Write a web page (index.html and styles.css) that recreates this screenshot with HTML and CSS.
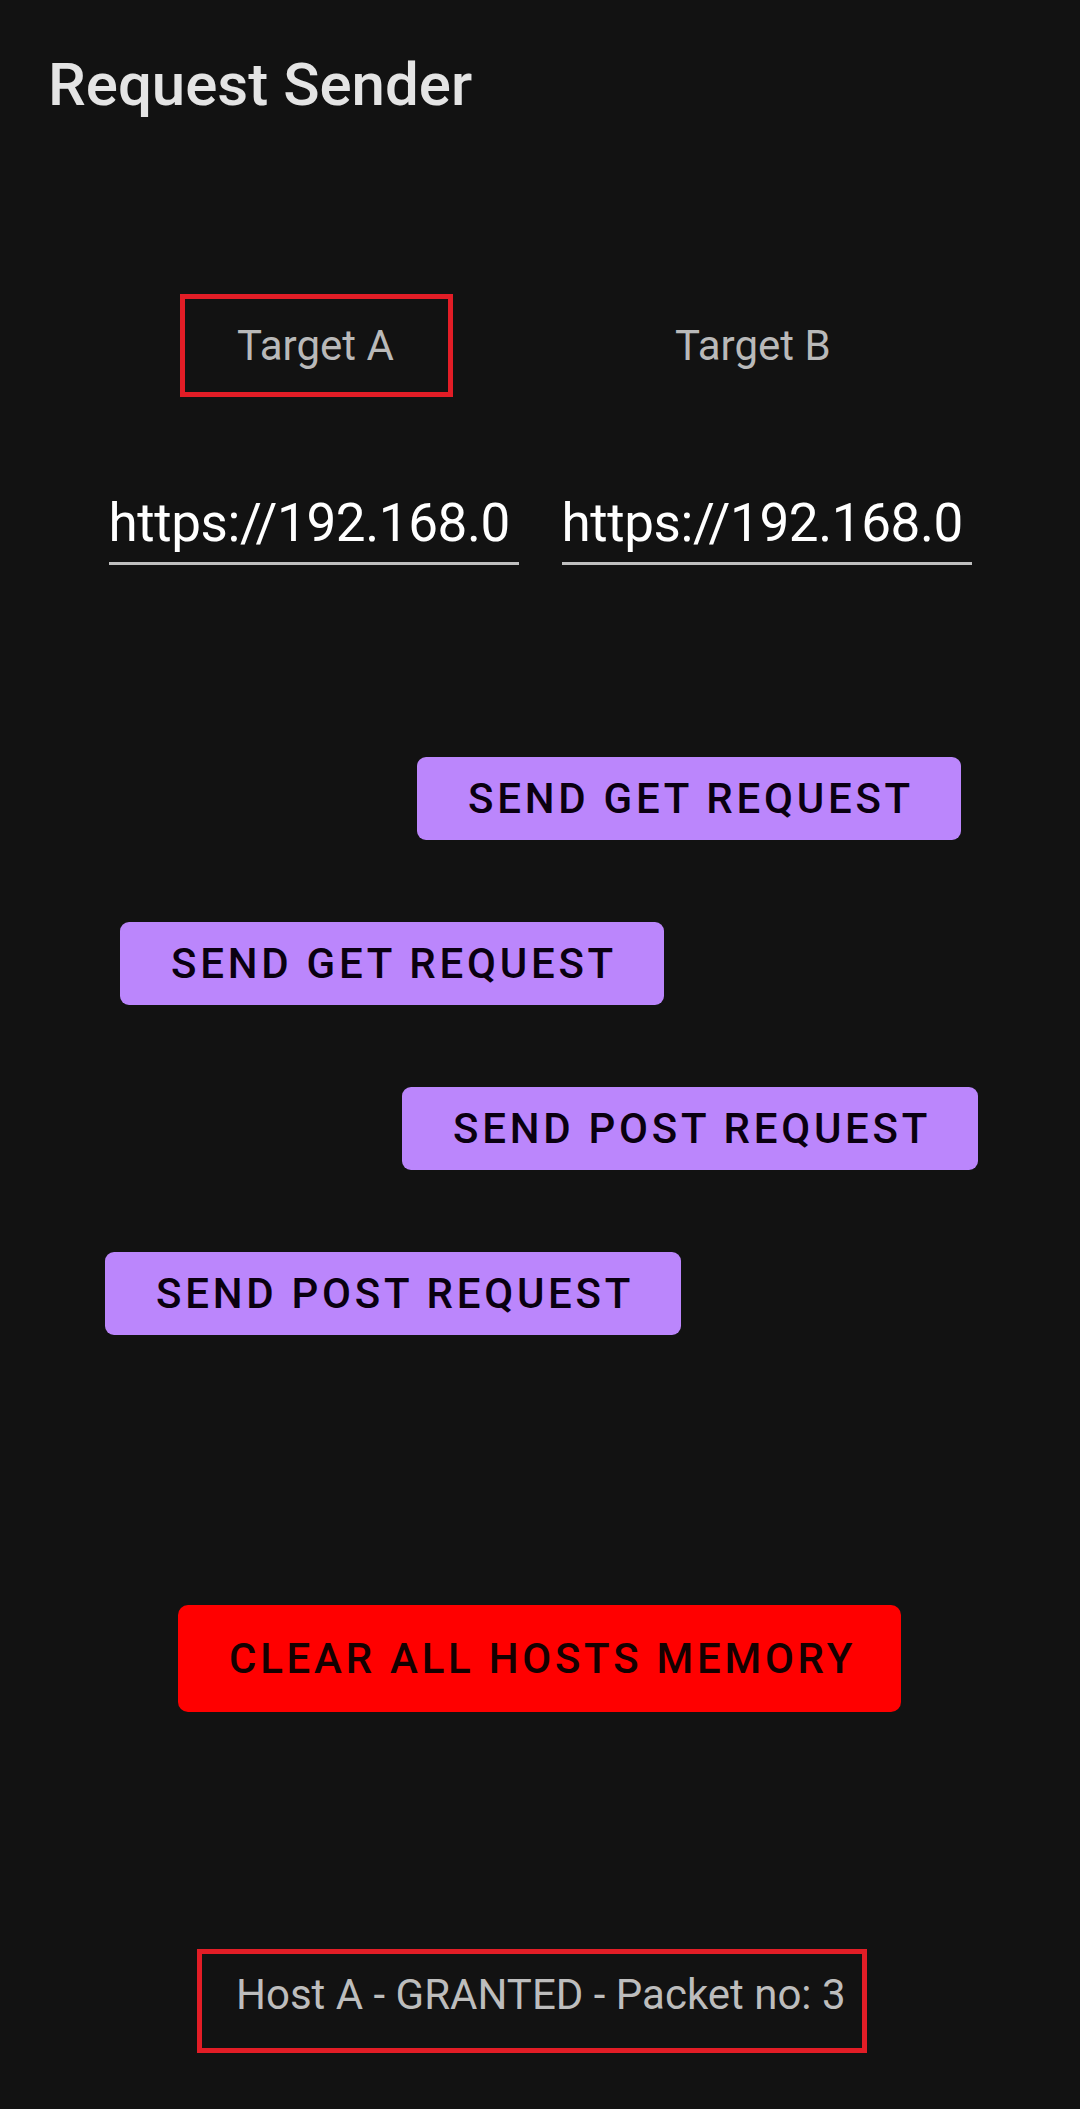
FILE: index.html
```html
<!DOCTYPE html>
<html lang="en">
<head>
<meta charset="utf-8">
<title>Request Sender</title>
<link rel="stylesheet" href="styles.css">
</head>
<body>
<div class="app">
  <header class="toolbar">
    <h1 class="title">Request Sender</h1>
  </header>

  <div class="targets">
    <div class="target target--selected">Target A</div>
    <div class="target">Target B</div>
  </div>

  <div class="urls">
    <div class="url">https://192.168.0</div>
    <div class="url">https://192.168.0</div>
  </div>

  <div class="actions">
    <div class="action-row action-row--b-get"><button class="btn">SEND GET REQUEST</button></div>
    <div class="action-row action-row--a-get"><button class="btn">SEND GET REQUEST</button></div>
    <div class="action-row action-row--b-post"><button class="btn">SEND POST REQUEST</button></div>
    <div class="action-row action-row--a-post"><button class="btn">SEND POST REQUEST</button></div>
  </div>

  <div class="clear-row">
    <button class="btn btn--danger">CLEAR ALL HOSTS MEMORY</button>
  </div>

  <div class="status-row">
    <div class="status">Host A - GRANTED - Packet no: 3</div>
  </div>
</div>
</body>
</html>
```

FILE: styles.css
```css
* {
  box-sizing: border-box;
}

html, body {
  margin: 0;
  padding: 0;
  background: #121212;
}

body {
  font-family: Roboto, "Noto Sans", "Liberation Sans", sans-serif;
  width: 1080px;
  min-height: 2109px;
}

.app {
  display: flex;
  flex-direction: column;
}

.toolbar {
  height: 120px;
  padding: 50px 0 0 48px;
}

.title {
  margin: 0;
  font-size: 60px;
  line-height: 70px;
  font-weight: 500;
  color: #e4e4e4;
}

.targets {
  margin-top: 174px;
  display: flex;
  gap: 165px;
  padding-left: 180px;
}

.target {
  width: 273px;
  height: 103px;
  border: 5px solid transparent;
  padding-left: 52px;
  display: flex;
  align-items: center;
  font-size: 42px;
  line-height: 49px;
  color: #b9b9b9;
}

.target--selected {
  border-color: #e21d26;
}

.urls {
  margin-top: 95px;
  display: flex;
  justify-content: center;
  gap: 43px;
}

.url {
  width: 410px;
  font-size: 53px;
  letter-spacing: -0.4px;
  line-height: 63px;
  color: #ffffff;
  padding-bottom: 7px;
  border-bottom: 3px solid #bfbfbf;
  white-space: nowrap;
}

.actions {
  margin-top: 192px;
  display: flex;
  flex-direction: column;
  gap: 82px;
}

.action-row {
  display: flex;
}

.action-row--b-get { padding-left: 417px; }
.action-row--a-get { padding-left: 120px; }
.action-row--b-post { padding-left: 402px; }
.action-row--a-post { padding-left: 105px; }

.btn {
  height: 83px;
  padding: 0 47px 0 51px;
  border: none;
  border-radius: 9px;
  background: #bb86fc;
  color: #0a0010;
  font-family: Roboto, "Noto Sans", "Liberation Sans", sans-serif;
  font-size: 42px;
  font-weight: 500;
  letter-spacing: 3.75px;
  line-height: 49px;
  white-space: nowrap;
}

.clear-row {
  margin-top: 270px;
  display: flex;
  padding-left: 178px;
}

.btn--danger {
  height: 107px;
  padding: 0 45px 0 51px;
  background: #ff0000;
  color: #140000;
  border-radius: 10px;
}

.status-row {
  margin-top: 237px;
  display: flex;
  padding-left: 197px;
}

.status {
  width: 670px;
  height: 104px;
  border: 5px solid #e21d26;
  padding: 16px 0 0 34px;
  font-size: 42px;
  line-height: 49px;
  color: #bdbdbd;
  white-space: nowrap;
}
```
